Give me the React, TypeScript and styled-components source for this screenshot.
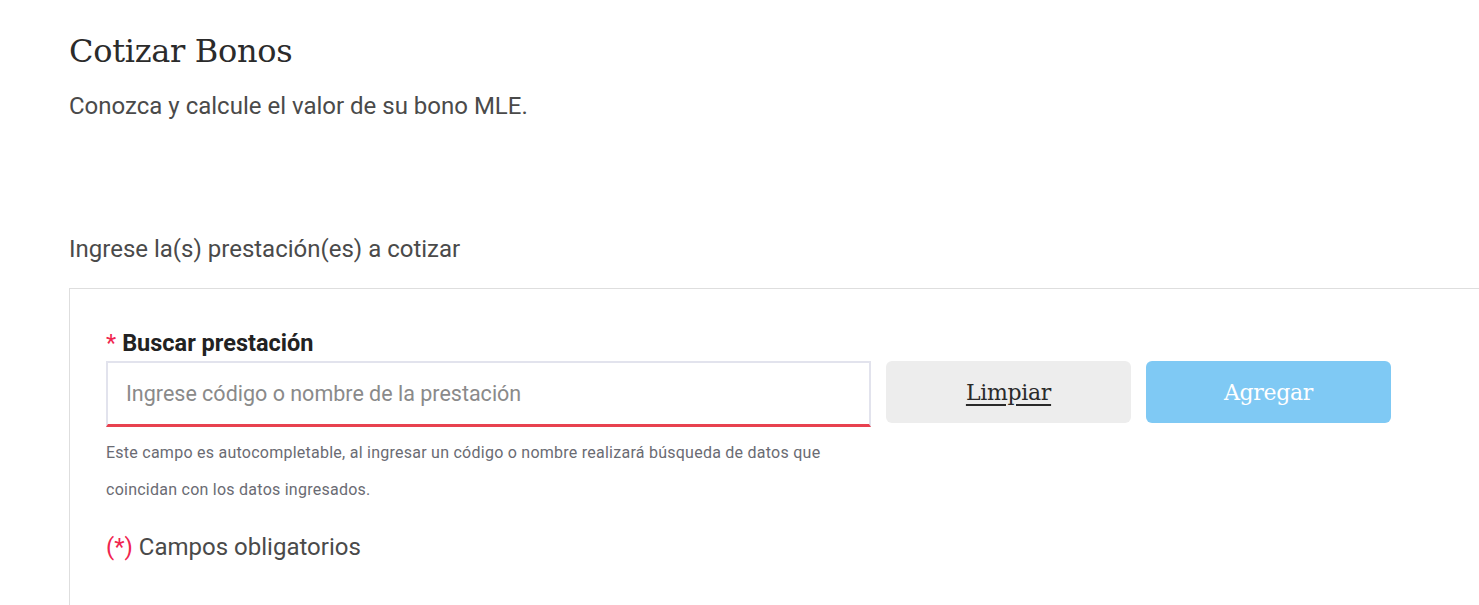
import React from 'react';
import styled, {createGlobalStyle} from 'styled-components';

const GlobalStyle = createGlobalStyle`
  body {
    margin: 0;
    background: #ffffff;
    font-family: Roboto, "Noto Sans", sans-serif;
    overflow: hidden;
  }
`;

const Page = styled.main`
  width: 1460px;
  padding: 29px 0 0 69px;
`;

const Title = styled.h1`
  margin: 0;
  font-family: "DejaVu Serif", "Liberation Serif", serif;
  font-weight: 400;
  font-size: 32px;
  line-height: 44px;
  color: #2b2b2b;
  letter-spacing: -0.3px;
`;

const Lead = styled.p`
  margin: 19px 0 0;
  font-size: 24px;
  line-height: 28px;
  color: #4a4a4a;
`;

const SectionTitle = styled.h2`
  margin: 115px 0 0;
  font-size: 24px;
  font-weight: 400;
  line-height: 28px;
  color: #4a4a4a;
`;

const Panel = styled.section`
  margin-top: 25px;
  border: 1px solid #dedede;
  border-right: none;
  padding: 39px 0 70px 36px;
`;

const Label = styled.label`
  display: block;
  font-size: 23.5px;
  font-weight: 700;
  line-height: 30px;
  color: #222222;
`;

const Required = styled.span`
  color: #f0254f;
  font-weight: 400;
  margin-right: 6px;
`;

const Row = styled.div`
  display: flex;
  align-items: flex-start;
  gap: 15px;
  margin-top: 3px;
`;

const Field = styled.div`
  width: 765px;
`;

const Input = styled.input`
  box-sizing: border-box;
  width: 100%;
  height: 66px;
  border: 2px solid #e2e3ed;
  border-bottom: 3px solid #e8414f;
  padding: 0 18px;
  font-family: Roboto, sans-serif;
  font-size: 21.5px;
  color: #333;
  outline: none;
  &::placeholder {
    color: #8a8a8a;
  }
`;

const Help = styled.p`
  margin: 7px 0 0;
  font-size: 16px;
  line-height: 37px;
  color: #6a6b73;
  letter-spacing: 0.25px;
`;

const Button = styled.button<{$primary?: boolean}>`
  width: 245px;
  height: 62px;
  border: none;
  border-radius: 6px;
  font-family: "DejaVu Serif", "Liberation Serif", serif;
  font-size: 22px;
  letter-spacing: -0.3px;
  background: ${(p) => (p.$primary ? '#7fc9f4' : '#ededed')};
  color: ${(p) => (p.$primary ? '#ffffff' : '#2a2a2a')};
  text-decoration: ${(p) => (p.$primary ? 'none' : 'underline')};
  text-underline-offset: 4px;
  cursor: pointer;
`;

const Note = styled.p`
  margin: 24px 0 0;
  font-size: 24px;
  line-height: 30px;
  color: #4a4a4a;
`;

const NoteMark = styled.span`
  color: #f0254f;
`;

export default function App() {
  return (
    <>
      <GlobalStyle/>
      <Page>
        <Title>Cotizar Bonos</Title>
        <Lead>Conozca y calcule el valor de su bono MLE.</Lead>
        <SectionTitle>Ingrese la(s) prestación(es) a cotizar</SectionTitle>
        <Panel>
          <Label htmlFor="prestacion">
            <Required>*</Required>Buscar prestación
          </Label>
          <Row>
            <Field>
              <Input id="prestacion" placeholder="Ingrese código o nombre de la prestación"/>
              <Help>
                Este campo es autocompletable, al ingresar un código o nombre realizará búsqueda de datos que
                coincidan con los datos ingresados.
              </Help>
            </Field>
            <Button type="button">Limpiar</Button>
            <Button type="button" $primary>Agregar</Button>
          </Row>
          <Note><NoteMark>(*)</NoteMark> Campos obligatorios</Note>
        </Panel>
      </Page>
    </>
  );
}
